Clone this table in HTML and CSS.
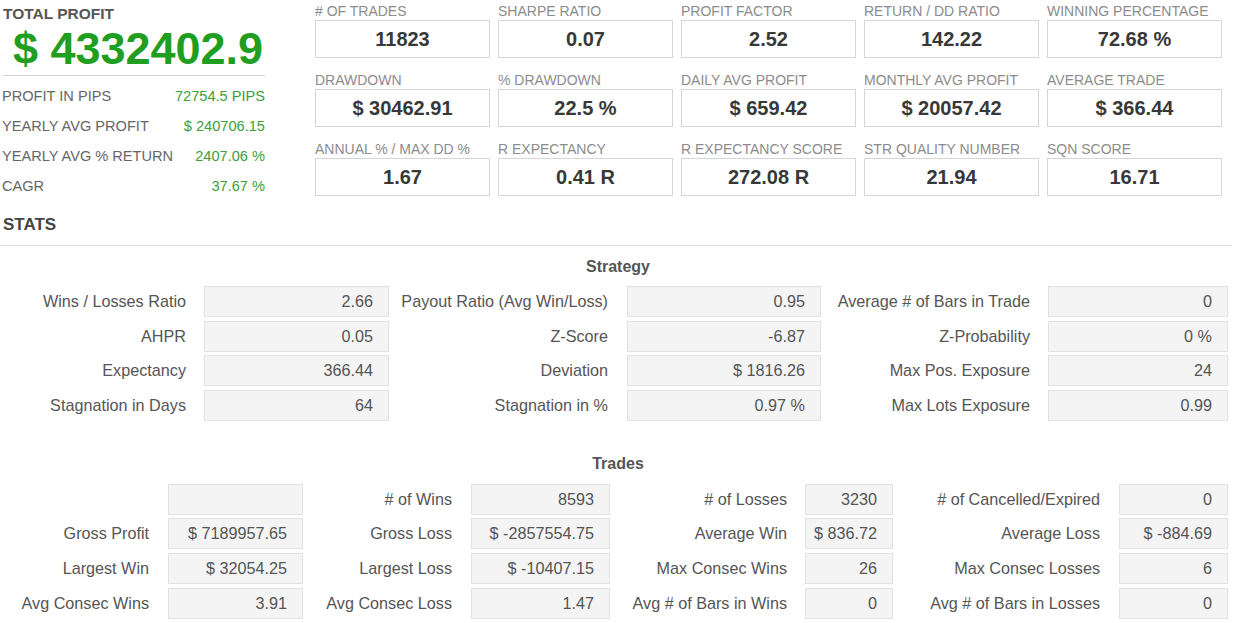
FILE: index.html
```html
<!DOCTYPE html>
<html>
<head>
<meta charset="utf-8">
<link rel="stylesheet" href="styles.css">
</head>
<body>
<div class="top">
  <div class="summary">
    <div class="total-label">TOTAL PROFIT</div>
    <div class="total-value">$ 4332402.9</div>
    <div class="sum-row"><span class="sum-key">PROFIT IN PIPS</span><span class="sum-val">72754.5 PIPS</span></div>
    <div class="sum-row"><span class="sum-key">YEARLY AVG PROFIT</span><span class="sum-val">$ 240706.15</span></div>
    <div class="sum-row"><span class="sum-key">YEARLY AVG % RETURN</span><span class="sum-val">2407.06 %</span></div>
    <div class="sum-row"><span class="sum-key">CAGR</span><span class="sum-val">37.67 %</span></div>
  </div>
  <div class="metrics">
    <div class="metric"><div class="m-label"># OF TRADES</div><div class="m-box">11823</div></div>
    <div class="metric"><div class="m-label">SHARPE RATIO</div><div class="m-box">0.07</div></div>
    <div class="metric"><div class="m-label">PROFIT FACTOR</div><div class="m-box">2.52</div></div>
    <div class="metric"><div class="m-label">RETURN / DD RATIO</div><div class="m-box">142.22</div></div>
    <div class="metric"><div class="m-label">WINNING PERCENTAGE</div><div class="m-box">72.68 %</div></div>
    <div class="metric"><div class="m-label">DRAWDOWN</div><div class="m-box">$ 30462.91</div></div>
    <div class="metric"><div class="m-label">% DRAWDOWN</div><div class="m-box">22.5 %</div></div>
    <div class="metric"><div class="m-label">DAILY AVG PROFIT</div><div class="m-box">$ 659.42</div></div>
    <div class="metric"><div class="m-label">MONTHLY AVG PROFIT</div><div class="m-box">$ 20057.42</div></div>
    <div class="metric"><div class="m-label">AVERAGE TRADE</div><div class="m-box">$ 366.44</div></div>
    <div class="metric"><div class="m-label">ANNUAL % / MAX DD %</div><div class="m-box">1.67</div></div>
    <div class="metric"><div class="m-label">R EXPECTANCY</div><div class="m-box">0.41 R</div></div>
    <div class="metric"><div class="m-label">R EXPECTANCY SCORE</div><div class="m-box">272.08 R</div></div>
    <div class="metric"><div class="m-label">STR QUALITY NUMBER</div><div class="m-box">21.94</div></div>
    <div class="metric"><div class="m-label">SQN SCORE</div><div class="m-box">16.71</div></div>
  </div>
</div>

<div class="stats-title">STATS</div>

<div class="section strategy-sec">
  <div class="sec-title">Strategy</div>
  <div class="grid strategy">
    <div class="lbl">Wins / Losses Ratio</div><div class="cell"><div class="box">2.66</div></div>
    <div class="lbl">Payout Ratio (Avg Win/Loss)</div><div class="cell"><div class="box">0.95</div></div>
    <div class="lbl">Average # of Bars in Trade</div><div class="cell"><div class="box">0</div></div>

    <div class="lbl">AHPR</div><div class="cell"><div class="box">0.05</div></div>
    <div class="lbl">Z-Score</div><div class="cell"><div class="box">-6.87</div></div>
    <div class="lbl">Z-Probability</div><div class="cell"><div class="box">0 %</div></div>

    <div class="lbl">Expectancy</div><div class="cell"><div class="box">366.44</div></div>
    <div class="lbl">Deviation</div><div class="cell"><div class="box">$ 1816.26</div></div>
    <div class="lbl">Max Pos. Exposure</div><div class="cell"><div class="box">24</div></div>

    <div class="lbl">Stagnation in Days</div><div class="cell"><div class="box">64</div></div>
    <div class="lbl">Stagnation in %</div><div class="cell"><div class="box">0.97 %</div></div>
    <div class="lbl">Max Lots Exposure</div><div class="cell"><div class="box">0.99</div></div>
  </div>
</div>

<div class="section trades-sec">
  <div class="sec-title">Trades</div>
  <div class="grid trades">
    <div class="lbl"></div><div class="cell"><div class="box"></div></div>
    <div class="lbl"># of Wins</div><div class="cell"><div class="box">8593</div></div>
    <div class="lbl"># of Losses</div><div class="cell"><div class="box">3230</div></div>
    <div class="lbl"># of Cancelled/Expired</div><div class="cell"><div class="box">0</div></div>

    <div class="lbl">Gross Profit</div><div class="cell"><div class="box">$ 7189957.65</div></div>
    <div class="lbl">Gross Loss</div><div class="cell"><div class="box">$ -2857554.75</div></div>
    <div class="lbl">Average Win</div><div class="cell"><div class="box">$ 836.72</div></div>
    <div class="lbl">Average Loss</div><div class="cell"><div class="box">$ -884.69</div></div>

    <div class="lbl">Largest Win</div><div class="cell"><div class="box">$ 32054.25</div></div>
    <div class="lbl">Largest Loss</div><div class="cell"><div class="box">$ -10407.15</div></div>
    <div class="lbl">Max Consec Wins</div><div class="cell"><div class="box">26</div></div>
    <div class="lbl">Max Consec Losses</div><div class="cell"><div class="box">6</div></div>

    <div class="lbl">Avg Consec Wins</div><div class="cell"><div class="box">3.91</div></div>
    <div class="lbl">Avg Consec Loss</div><div class="cell"><div class="box">1.47</div></div>
    <div class="lbl">Avg # of Bars in Wins</div><div class="cell"><div class="box">0</div></div>
    <div class="lbl">Avg # of Bars in Losses</div><div class="cell"><div class="box">0</div></div>
  </div>
</div>
</body>
</html>
```

FILE: styles.css
```css
* { box-sizing: border-box; }

body {
  margin: 0;
  background: #ffffff;
  font-family: "Liberation Sans", Arial, sans-serif;
  color: #555;
  width: 1236px;
  overflow: hidden;
}

.top {
  display: flex;
  align-items: flex-start;
}

.summary {
  width: 263px;
  margin-left: 2px;
  padding-top: 5px;
}

.total-label {
  font-size: 15.5px;
  line-height: 18px;
  font-weight: bold;
  color: #555;
  padding-left: 1px;
}

.total-value {
  margin-top: 2px;
  font-size: 45px;
  line-height: 48px;
  font-weight: bold;
  color: #1f9e1f;
  text-align: center;
  padding-left: 8px;
  padding-bottom: 2px;
  border-bottom: 1px solid #d4d4d4;
  margin-left: 1px;
  margin-bottom: 5px;
}

.sum-row {
  display: flex;
  justify-content: space-between;
  font-size: 14.6px;
  line-height: 30px;
}

.sum-key { color: #666; }
.sum-val { color: #3aa03a; }

.metrics {
  margin-left: 50px;
  padding-top: 3px;
  display: grid;
  grid-template-columns: repeat(5, 175px);
  column-gap: 8px;
  row-gap: 14px;
}

.m-label {
  font-size: 14px;
  line-height: 16px;
  color: #8c8c8c;
  margin-bottom: 1px;
  white-space: nowrap;
}

.m-box {
  height: 38px;
  border: 1px solid #d6d6d6;
  background: #fff;
  text-align: center;
  font-size: 20px;
  font-weight: bold;
  line-height: 36px;
  color: #383838;
}

.stats-title {
  margin-top: 14px;
  padding-left: 3px;
  font-size: 17px;
  line-height: 20px;
  font-weight: bold;
  color: #444;
  padding-bottom: 10px;
  border-bottom: 1px solid #dcdcdc;
  width: 1232px;
}

.section { width: 1236px; }
.strategy-sec { margin-top: 11px; }
.trades-sec { margin-top: 33px; }

.sec-title {
  text-align: center;
  font-size: 16px;
  line-height: 20px;
  font-weight: bold;
  color: #555;
  margin-bottom: 9px;
}

.trades-sec .sec-title { margin-bottom: 10px; }

.grid {
  display: grid;
  grid-auto-rows: 31px;
  row-gap: 3.6px;
  width: 1228px;
}

.strategy {
  grid-template-columns: 186px 203px 219px 213px 209px 198px;
}

.trades {
  grid-template-columns: 149px 154px 149px 158px 177px 106px 207px 128px;
}

.lbl {
  text-align: right;
  font-size: 16.2px;
  line-height: 31px;
  color: #555;
  white-space: nowrap;
}

.cell {
  display: flex;
  justify-content: flex-end;
}

.box {
  height: 31px;
  background: #f4f4f4;
  border: 1px solid #e2e2e2;
  text-align: right;
  padding-right: 15px;
  font-size: 16.2px;
  line-height: 29px;
  color: #555;
  white-space: nowrap;
}

.strategy .cell:nth-child(6n+2) .box { width: 185px; }
.strategy .cell:nth-child(6n+4) .box { width: 194px; }
.strategy .cell:nth-child(6n+6) .box { width: 180px; }

.trades .cell:nth-child(8n+2) .box { width: 135px; }
.trades .cell:nth-child(8n+4) .box { width: 139px; }
.trades .cell:nth-child(8n+6) .box { width: 88px; }
.trades .cell:nth-child(8n+8) .box { width: 109px; }
```
